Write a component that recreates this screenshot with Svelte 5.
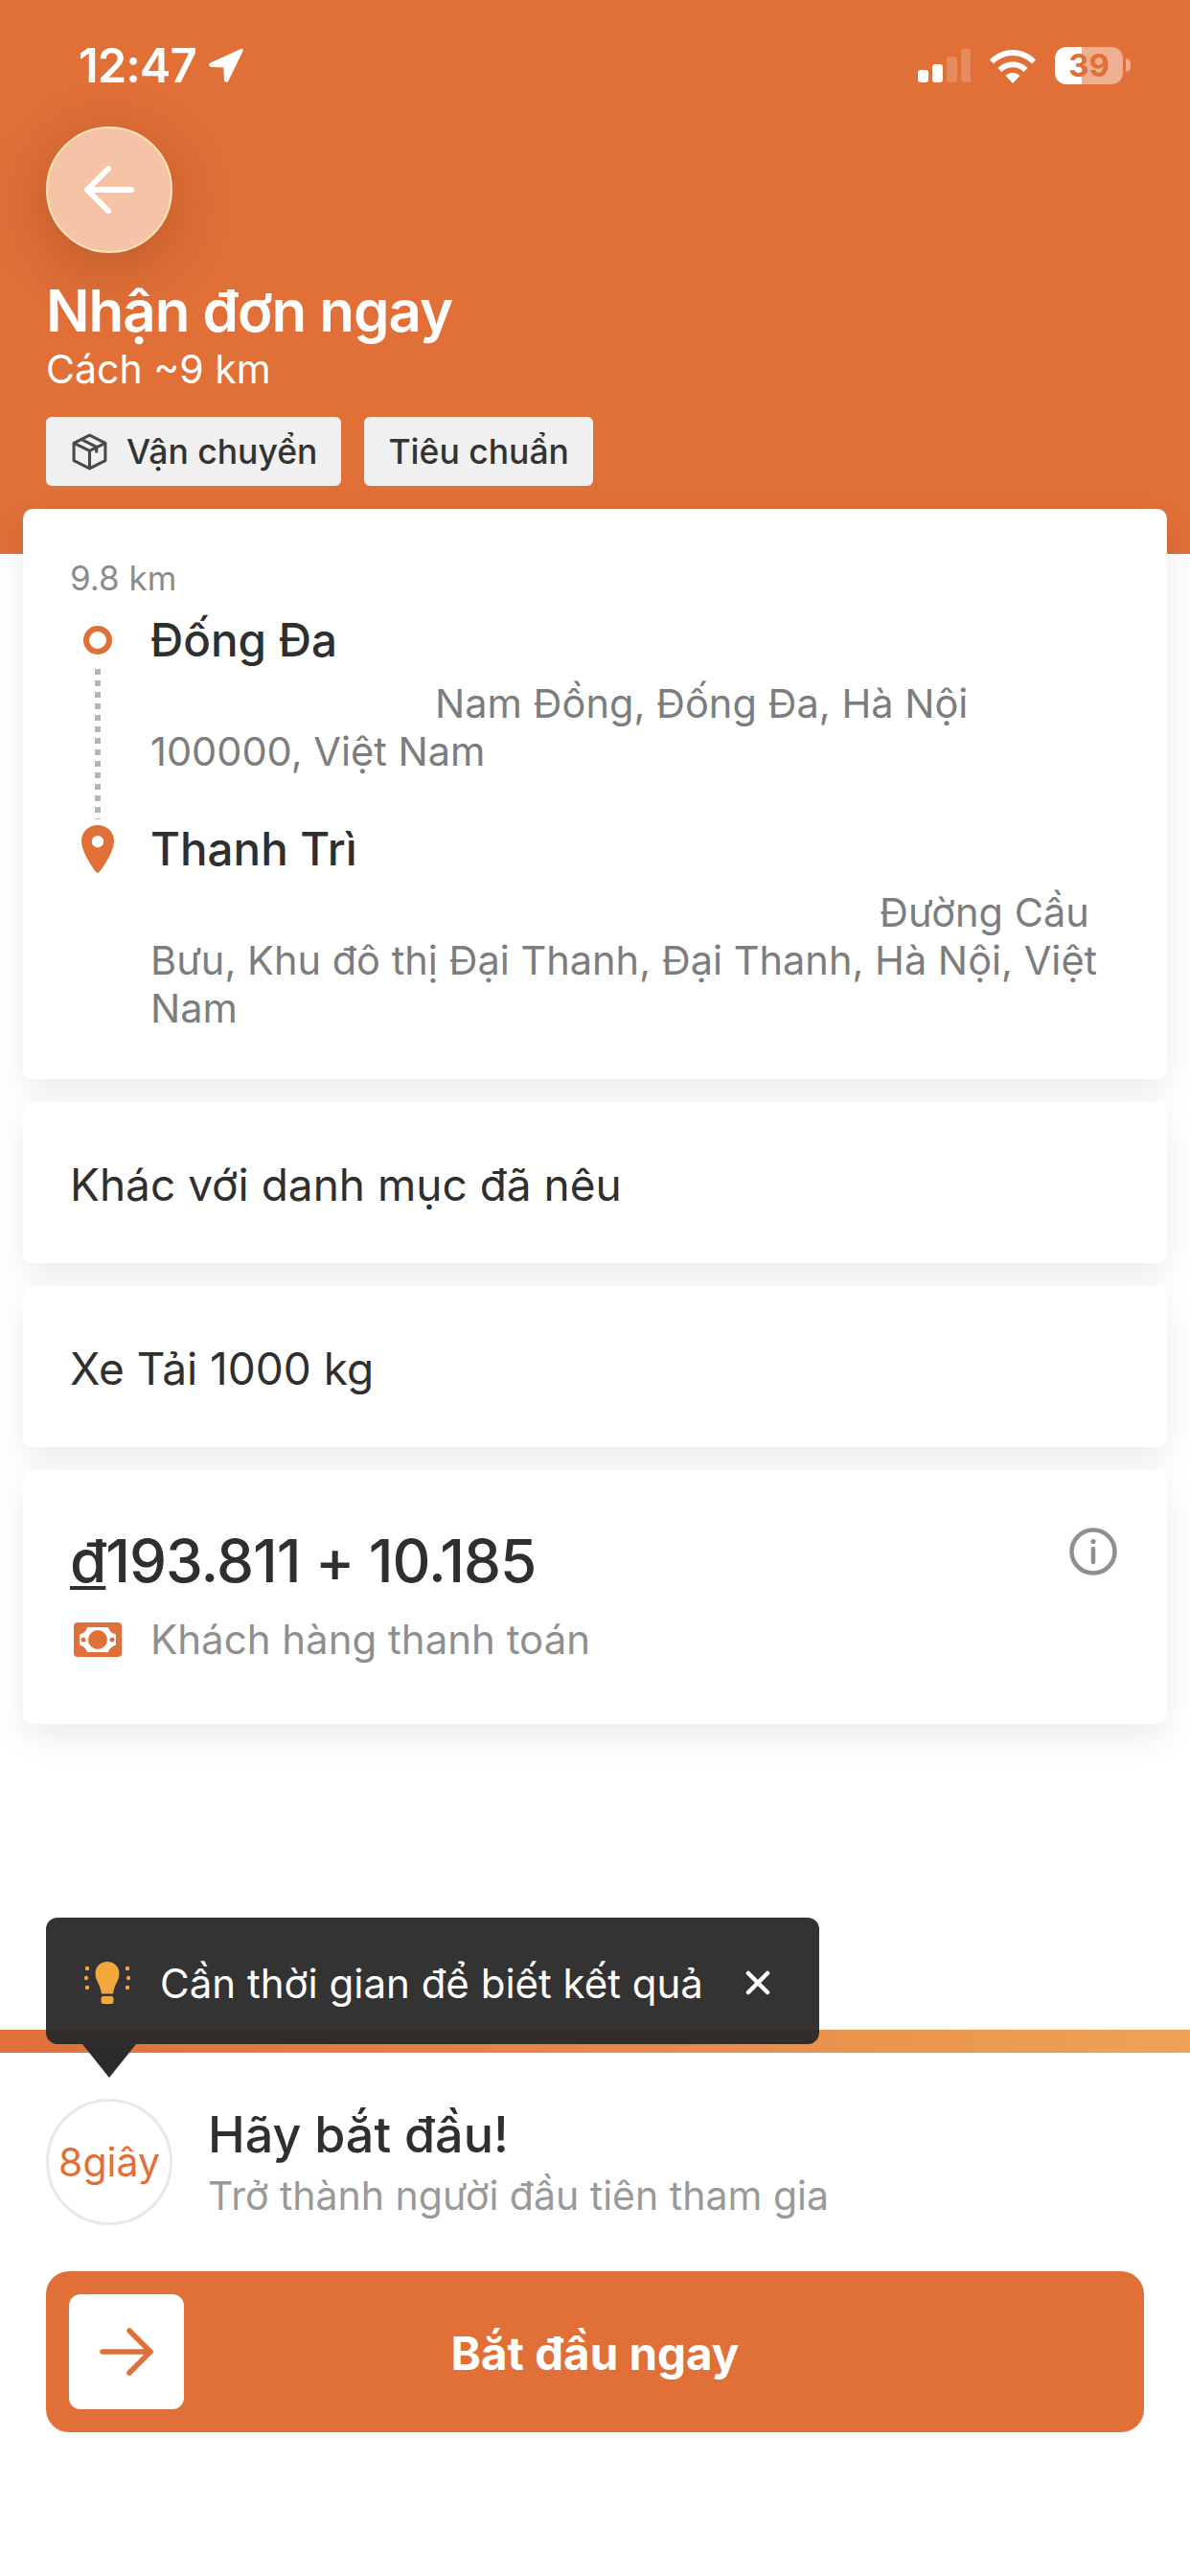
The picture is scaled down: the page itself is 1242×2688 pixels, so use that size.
<script>
  const route = [
    { name: "Đống Đa", lines: ["Nam Đồng, Đống Đa, Hà Nội", "100000, Việt Nam"], indent: 297 },
    { name: "Thanh Trì", lines: ["Đường Cầu", "Bưu, Khu đô thị Đại Thanh, Đại Thanh, Hà Nội, Việt", "Nam"], indent: 761 }
  ];
</script>

<div class="page">
  <header class="head">
    <div class="status">
      <div class="time">
        <span>12:47</span>
        <svg width="38" height="38" viewBox="0 0 38 38"><path d="M35 3 3 17.500c-1.600.8-1 2.600.6 2.600l13.800.4.5 13.800c.1 1.700 2 2 2.700.5L35.500 4c.5-1-.4-1.500-.5-1z" fill="#fff" stroke="#fff" stroke-width="2" stroke-linejoin="round"/></svg>
      </div>
      <div class="indicators">
        <svg class="signal" width="55" height="35" viewBox="0 0 55 35">
          <rect x="0" y="22" width="11" height="13" rx="3" fill="#fff"/>
          <rect x="15" y="16" width="11" height="19" rx="3" fill="#fff"/>
          <rect x="30" y="8" width="11" height="27" rx="3" fill="#fff" opacity=".2"/>
          <rect x="45" y="0" width="11" height="35" rx="3" fill="#fff" opacity=".2"/>
        </svg>
        <svg class="wifi" width="48" height="37" viewBox="0 0 48 37">
          <path d="M0 12.500C6.500 5.500 15 2 24 2s17.500 3.500 24 10.500l-4 4C38.500 11 31.500 8 24 8S9.500 11 4 16.500z" fill="#fff"/>
          <path d="M8.500 21C12.500 16.800 18 14.500 24 14.500S35.500 16.800 39.500 21l-4 4C32.500 22 28.500 20.300 24 20.300S15.500 22 12.500 25z" fill="#fff"/>
          <path d="M16.500 29c2-2 4.600-3 7.500-3s5.500 1 7.500 3L24 37z" fill="#fff"/>
        </svg>
        <div class="battery">
          <div class="cell"><span>39</span></div>
          <i class="nub"></i>
        </div>
      </div>
    </div>
    <button class="back" aria-label="Quay lại">
      <svg width="56" height="50" viewBox="0 0 56 50" fill="none" stroke="#fff" stroke-width="6" stroke-linecap="round" stroke-linejoin="round"><path d="M51 25H5M27 3 5 25l22 22"/></svg>
    </button>
    <h1>Nhận đơn ngay</h1>
    <p class="sub">Cách ~9 km</p>
    <div class="tags">
      <span class="tag">
        <svg width="41" height="41" viewBox="0 0 40 40" fill="none" stroke="#4a4a4a" stroke-width="3" stroke-linejoin="round"><path d="M20 3 36 11v18l-16 8-16-8V11z"/><path d="M4 11l16 8 16-8M20 19v18M11 7l16 8v6"/></svg>
        Vận chuyển
      </span>
      <span class="tag">Tiêu chuẩn</span>
    </div>
  </header>

  <main class="cards">
    <section class="card route">
      <div class="dist">9.8 km</div>
      {#each route as stop, i}
        <div class="stop">
          <div class="marker" class:end={i > 0}>
            {#if i === 0}
              <i class="ring"></i>
              <i class="dots"></i>
            {:else}
              <svg width="34" height="50" viewBox="0 0 34 50"><path fill-rule="evenodd" d="M17 0c9.500 0 17 7 17 16.500C34 28 22 45 18.500 49c-.8 1-2.200 1-3 0C12 45 0 28 0 16.500 0 7 7.500 0 17 0zm0 11a6.200 6.200 0 1 0 0 12.400A6.200 6.200 0 0 0 17 11z" fill="#e06f38"/></svg>
            {/if}
          </div>
          <div class="place">
            <div class="name">{stop.name}</div>
            <div class="addr">
              {#each stop.lines as line, j}
                <div style:text-indent={j === 0 ? stop.indent + "px" : null}>{line}</div>
              {/each}
            </div>
          </div>
        </div>
      {/each}
    </section>

    <section class="card row">Khác với danh mục đã nêu</section>
    <section class="card row">Xe Tải 1000 kg</section>

    <section class="card price">
      <div class="amount"><u>đ</u>193.811 + 10.185</div>
      <svg class="info" width="50" height="50" viewBox="0 0 50 50" fill="none" stroke="#8f8f8f"><circle cx="25" cy="25" r="22.500" stroke-width="4.500"/><path d="M25 22v14" stroke-width="4.500" stroke-linecap="round"/><circle cx="25" cy="14.500" r="2.600" fill="#8f8f8f" stroke="none"/></svg>
      <div class="pay">
        <svg width="50" height="36" viewBox="0 0 50 36">
          <rect width="50" height="36" rx="4" fill="#e06f38"/>
          <path d="M14 5h22c1 4 4 6.500 8 7.500v11c-4 1-7 3.500-8 7.500H14c-1-4-4-6.500-8-7.500v-11c4-1 7-3.500 8-7.500z" fill="#fff"/>
          <circle cx="25" cy="18" r="10" fill="#e06f38"/>
          <circle cx="10" cy="18" r="2.500" fill="#e06f38"/>
          <circle cx="40" cy="18" r="2.500" fill="#e06f38"/>
        </svg>
        <span>Khách hàng thanh toán</span>
      </div>
    </section>
  </main>

  <footer class="foot">
    <div class="tip">
      <svg width="50" height="46" viewBox="0 0 50 46">
        <path d="M25 1c7.500 0 12.500 5.500 12.500 12.500 0 7-5 10.500-6.500 21H19C17.500 24 12.500 20.500 12.500 13.500 12.500 6.500 17.500 1 25 1z" fill="#f3a83c"/>
        <rect x="18.500" y="37" width="13" height="8" rx="2.500" fill="#f3a83c"/>
        <g fill="#f3a83c"><circle cx="4" cy="8" r="2.200"/><circle cx="3" cy="18" r="2.200"/><circle cx="4" cy="28" r="2.200"/><circle cx="46" cy="8" r="2.200"/><circle cx="47" cy="18" r="2.200"/><circle cx="46" cy="28" r="2.200"/></g>
      </svg>
      <span>Cần thời gian để biết kết quả</span>
      <svg class="close" width="26" height="26" viewBox="0 0 26 26" stroke="#fff" stroke-width="4.500" stroke-linecap="round"><path d="M3 3l20 20M23 3 3 23"/></svg>
    </div>
    <div class="progress"></div>
    <div class="timer-row">
      <div class="timer">8giây</div>
      <div class="go">
        <div class="go-title">Hãy bắt đầu!</div>
        <div class="go-sub">Trở thành người đầu tiên tham gia</div>
      </div>
    </div>
    <button class="start">
      <span class="start-icon">
        <svg width="56" height="50" viewBox="0 0 56 50" fill="none" stroke="#e06f38" stroke-width="5.500" stroke-linecap="round" stroke-linejoin="round"><path d="M3 25h50M31 3l22 22-22 22"/></svg>
      </span>
      <span class="start-label">Bắt đầu ngay</span>
    </button>
  </footer>
</div>

<style>
  :global(body) {
    margin: 0;
    background: #fff;
  }

  .page {
    width: 1242px;
    height: 2688px;
    display: flex;
    flex-direction: column;
    font-family: Inter, "Noto Sans", sans-serif;
    color: #2f2f2f;
    overflow: hidden;
  }

  /* header */
  .head {
    height: 578px;
    box-sizing: border-box;
    background: #e06f38;
    color: #fff;
    padding: 48px 48px 0;
    flex: none;
  }

  .status {
    height: 40px;
    display: flex;
    justify-content: space-between;
    align-items: center;
    padding: 0 14px 0 34px;
  }

  .time {
    display: flex;
    align-items: center;
    gap: 12px;
    font-size: 49px;
    font-weight: 600;
    letter-spacing: -1px;
  }

  .indicators {
    display: flex;
    align-items: center;
    gap: 20px;
  }

  .battery {
    display: flex;
    align-items: center;
    gap: 3px;
  }

  .cell {
    width: 71px;
    height: 39px;
    border-radius: 12px;
    background: linear-gradient(90deg, #fff 39%, rgba(255, 255, 255, 0.45) 39%);
    display: flex;
    align-items: center;
    justify-content: center;
    font-size: 33px;
    font-weight: 700;
    color: #e06f38;
  }

  .nub {
    width: 5px;
    height: 14px;
    border-radius: 0 5px 5px 0;
    background: rgba(255, 255, 255, 0.45);
  }

  .back {
    display: flex;
    align-items: center;
    justify-content: center;
    width: 132px;
    height: 132px;
    margin-top: 44px;
    padding: 0;
    border: 2px solid #fbe4b8;
    border-radius: 50%;
    background: #f5c3a5;
    box-shadow: 0 14px 60px rgba(90, 40, 10, 0.28);
  }

  h1 {
    margin: 25px 0 0;
    font-size: 60px;
    line-height: 70px;
    font-weight: 600;
    letter-spacing: -1px;
  }

  .sub {
    margin: 0;
    font-size: 41px;
    line-height: 52px;
  }

  .tags {
    display: flex;
    gap: 24px;
    margin-top: 24px;
  }

  .tag {
    display: flex;
    align-items: center;
    gap: 18px;
    height: 72px;
    padding: 0 25px;
    border-radius: 6px;
    background: #f0f0f0;
    color: #333;
    font-size: 35.5px;
    font-weight: 500;
  }

  /* cards */
  .cards {
    display: flex;
    flex-direction: column;
    gap: 24px;
    margin: -47px 24px 0;
    position: relative;
  }

  .card {
    background: #fff;
    border-radius: 10px;
    box-shadow: 0 14px 36px rgba(0, 0, 0, 0.08);
    box-sizing: border-box;
  }

  .route {
    height: 595px;
    padding: 52px 48px 0 49px;
  }

  .dist {
    font-size: 35px;
    line-height: 40px;
    color: #8c8c8c;
  }

  .stop {
    display: flex;
    gap: 26px;
    margin-top: 14px;
  }

  .stop + .stop {
    margin-top: 0;
  }

  .marker {
    width: 58px;
    flex: none;
    display: flex;
    flex-direction: column;
    align-items: center;
    padding-top: 16px;
    box-sizing: border-box;
  }

  .marker.end {
    padding-top: 6px;
  }

  .ring {
    width: 30px;
    height: 30px;
    box-sizing: border-box;
    border: 6px solid #e06f38;
    border-radius: 50%;
  }

  .dots {
    width: 6px;
    height: 157px;
    margin-top: 15px;
    background: repeating-linear-gradient(180deg, #b3b3b3 0 6px, transparent 6px 12px);
  }

  .name {
    font-size: 47.500px;
    line-height: 62px;
    font-weight: 500;
  }

  .addr {
    margin-top: 10px;
    font-size: 41.500px;
    line-height: 50px;
    color: #7d7d7d;
    white-space: nowrap;
  }

  .row {
    height: 168px;
    padding: 3px 49px 0;
    display: flex;
    align-items: center;
    font-size: 46px;
  }

  .price {
    height: 265px;
    padding: 55px 49px 0;
    position: relative;
  }

  .amount {
    font-size: 62px;
    line-height: 80px;
    font-weight: 500;
    letter-spacing: -1px;
  }

  .amount u {
    text-underline-offset: 4px;
    text-decoration-thickness: 4px;
  }

  .info {
    position: absolute;
    right: 52px;
    top: 60px;
  }

  .pay {
    display: flex;
    align-items: center;
    gap: 30px;
    margin-top: 16px;
    padding-left: 4px;
    font-size: 42px;
    color: #8f8f8f;
  }

  /* bottom sheet */
  .foot {
    margin-top: auto;
    height: 570px;
    position: relative;
    flex: none;
  }

  .tip {
    position: absolute;
    left: 48px;
    top: -117px;
    width: 807px;
    height: 132px;
    box-sizing: border-box;
    padding: 4px 0 0 39px;
    display: flex;
    align-items: center;
    gap: 30px;
    border-radius: 12px;
    background: rgba(40, 40, 40, 0.95);
    color: #fff;
    font-size: 42px;
    z-index: 1;
  }

  .tip::after {
    content: "";
    position: absolute;
    left: 38px;
    top: 132px;
    border-left: 28px solid transparent;
    border-right: 28px solid transparent;
    border-top: 35px solid #2b2b2b;
  }

  .close {
    margin-left: 14px;
  }

  .progress {
    height: 24px;
    background: linear-gradient(90deg, #e06f38, #eea256);
  }

  .timer-row {
    display: flex;
    align-items: center;
    gap: 37px;
    margin: 48px 48px 0;
  }

  .timer {
    width: 132px;
    height: 132px;
    box-sizing: border-box;
    flex: none;
    display: flex;
    align-items: center;
    justify-content: center;
    border: 3px solid #e8e8e8;
    border-radius: 50%;
    color: #e06f38;
    font-size: 41px;
  }

  .go {
    padding-top: 3px;
  }

  .go-title {
    font-size: 52px;
    line-height: 66px;
    font-weight: 500;
  }

  .go-sub {
    font-size: 41px;
    line-height: 60px;
    color: #999;
  }

  .start {
    display: flex;
    align-items: center;
    width: 1146px;
    height: 168px;
    margin: 48px 48px 0;
    padding: 0 24px;
    border: none;
    border-radius: 24px;
    background: #e06f38;
    color: #fff;
    font-family: inherit;
    position: relative;
  }

  .start-icon {
    display: flex;
    align-items: center;
    justify-content: center;
    width: 120px;
    height: 120px;
    border-radius: 12px;
    background: #fff;
  }

  .start-label {
    flex: 1;
    margin-right: 120px;
    padding-top: 2px;
    text-align: center;
    font-size: 47.500px;
    font-weight: 700;
  }
</style>
